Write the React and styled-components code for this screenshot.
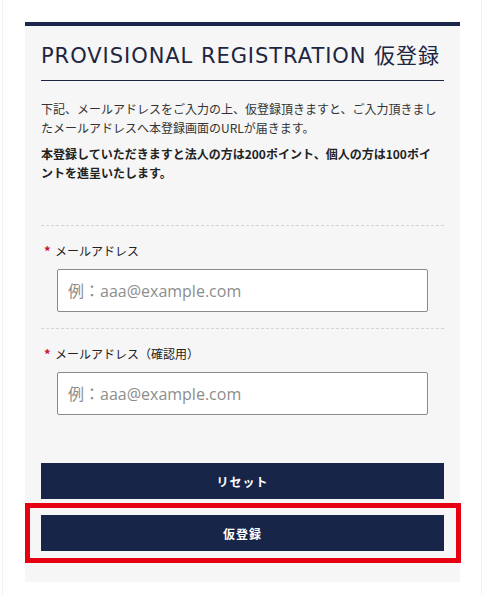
import React from 'react'
import styled, { createGlobalStyle } from 'styled-components'

const GlobalStyle = createGlobalStyle`
  body {
    margin: 0;
    background: #fff;
    font-family: "Noto Sans CJK JP", "Noto Sans", sans-serif;
    color: #333;
  }
`

const Page = styled.div`
  width: 480px;
  box-sizing: border-box;
  margin-left: 2px;
  padding: 22px 0 13px 22px;
  border-left: 1px solid #f1f1f1;
  border-right: 1px solid #f1f1f1;
`

const Card = styled.section`
  width: 435px;
  box-sizing: border-box;
  background: #f6f6f6;
  border-top: 4px solid #1a2749;
  padding: 0 16px 19px;
`

const Title = styled.h1`
  margin: 0;
  padding: 16px 0 10px;
  font-family: "DejaVu Sans", "Noto Sans CJK JP", sans-serif;
  font-weight: normal;
  font-size: 21px;
  letter-spacing: 0.95px;
  line-height: 28px;
  color: #1e2540;
  border-bottom: 1px solid #1e2540;
  white-space: nowrap;
`

const Lead = styled.p`
  margin: ${props => props.strong ? '7px 0 0' : '18px 0 0'};
  padding-right: ${props => props.strong ? '6px' : '0'};
  font-size: 12px;
  line-height: 19px;
  font-weight: ${props => props.strong ? 700 : 400};
  color: ${props => props.strong ? '#222' : '#333'};
`

const Fields = styled.div`
  margin-top: 43px;
`

const Field = styled.div`
  border-top: 1px dashed #d4d4d4;
  padding: 16px 0 16px;
`

const Label = styled.label`
  display: flex;
  align-items: center;
  font-size: 12px;
  line-height: 18px;
  color: #222;
`

const Required = styled.span`
  color: #c8163a;
  width: 14px;
  padding-left: 3px;
  box-sizing: border-box;
  font-size: 13px;
  font-weight: 700;
`

const Input = styled.input`
  display: block;
  box-sizing: border-box;
  width: 371px;
  height: 43px;
  margin: 9px 0 0 16px;
  padding: 0 10px;
  border: 1px solid #8a8a8a;
  border-radius: 2px;
  background: #fff;
  font-family: "Open Sans", "Noto Sans CJK JP", sans-serif;
  font-size: 16px;
  color: #333;
  &::placeholder {
    color: #8d8d8d;
  }
`

const Actions = styled.div`
  margin-top: 32px;
  display: flex;
  flex-direction: column;
  gap: 4px;
`

const Button = styled.button`
  display: block;
  width: 100%;
  height: 36px;
  border: 0;
  background: #172549;
  color: #fff;
  font-family: "Noto Sans CJK JP", sans-serif;
  font-weight: 700;
  font-size: 12px;
  letter-spacing: 1px;
  cursor: pointer;
`

const Highlight = styled.div`
  margin: 0 -17px 0 -16px;
  border: 5px solid #e60012;
  padding: 7px 12px 7px 11px;
`

const App = () => (
  <Page>
    <GlobalStyle />
    <Card>
      <Title>PROVISIONAL REGISTRATION 仮登録</Title>
      <Lead>
        下記、メールアドレスをご入力の上、仮登録頂きますと、ご入力頂きましたメールアドレスへ本登録画面のURLが届きます。
      </Lead>
      <Lead strong>
        本登録していただきますと法人の方は200ポイント、個人の方は100ポイントを進呈いたします。
      </Lead>
      <Fields>
        <Field>
          <Label><Required>*</Required>メールアドレス</Label>
          <Input type="email" placeholder="例：aaa@example.com" />
        </Field>
        <Field>
          <Label><Required>*</Required>メールアドレス（確認用）</Label>
          <Input type="email" placeholder="例：aaa@example.com" />
        </Field>
      </Fields>
      <Actions>
        <Button type="reset">リセット</Button>
        <Highlight>
          <Button type="submit">仮登録</Button>
        </Highlight>
      </Actions>
    </Card>
  </Page>
)

export default App
